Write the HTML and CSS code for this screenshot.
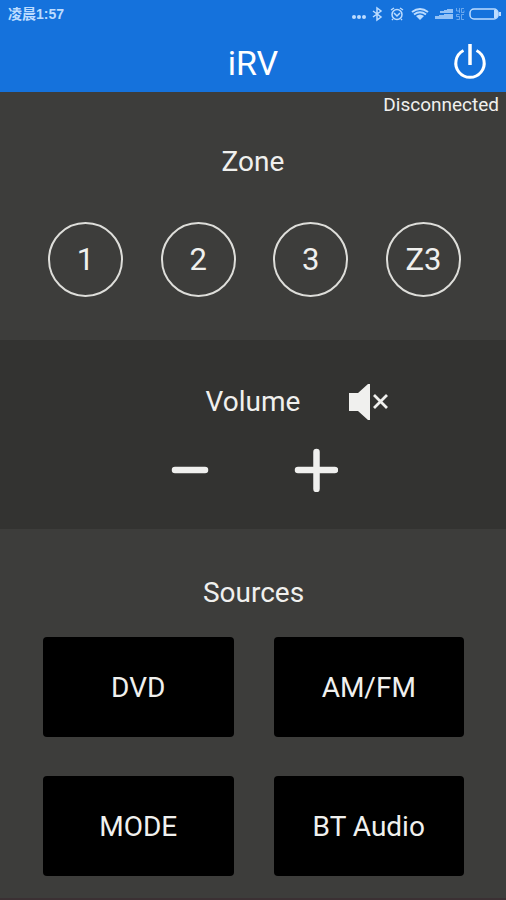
FILE: index.html
```html
<!DOCTYPE html>
<html lang="en">
<head>
<meta charset="utf-8">
<meta name="viewport" content="width=device-width, initial-scale=1">
<title>iRV</title>
<link rel="stylesheet" href="styles.css">
</head>
<body>
<div class="status-bar">
  <span class="clock" lang="zh-CN">凌晨1:57</span>
  <svg class="status-icons" viewBox="0 0 150 18" aria-hidden="true">
    <g fill="currentColor">
      <circle cx="2" cy="12" r="2"/><circle cx="7" cy="12" r="2"/><circle cx="12" cy="12" r="2"/>
    </g>
    <g fill="none" stroke="currentColor" stroke-width="1.500">
      <path d="M21 6l8 6-4 3V3l4 3-8 6"/>
      <circle cx="45" cy="9.500" r="5"/>
      <path d="M42 8l3 3 3-3M39 5l3-2M51 5l-3-2M41 14l-1 1M49 14l1 1"/>
      <path d="M60 7q8-6 16 0M62 9.500q6-4.500 12 0" stroke-width="2"/>
    </g>
    <path d="M64 11q4-3 8 0l-4 4z" fill="currentColor"/>
    <path d="M85 8h3V6h4V5h3V4h6v4zM83 14v-3h4v-1h5V9h9v5z" fill="currentColor" opacity=".75"/>
    <g fill="none" stroke="currentColor" opacity=".5">
      <path d="M104.500 3v3h3M107.500 3v5M112 3.500h-2.500v4h2.500v-2M107.500 9.500h-3v2h3v3h-3M112 9.500h-2.500v5h2.500"/>
    </g>
    <rect x="118" y="4" width="28" height="10" rx="4" fill="none" stroke="currentColor" stroke-width="1.500"/>
    <path d="M142 5h2q2 0 2 4t-2 4h-2zM147 7h2v4h-2z" fill="currentColor"/>
  </svg>
</div>
<header class="app-bar">
  <h1 class="app-title">iRV</h1>
  <button class="icon-button power" type="button" aria-label="Power">
    <svg class="power-icon" viewBox="0 0 36 40" fill="none" stroke="currentColor" stroke-width="3" aria-hidden="true">
      <path d="M11.500 7.500A14.200 14.200 0 1 0 24.500 7.500"/>
      <path d="M18 1v21" stroke-width="3.500"/>
    </svg>
  </button>
</header>
<main class="panels">
  <section class="zone">
    <p class="connection">Disconnected</p>
    <h2 class="heading">Zone</h2>
    <div class="zone-list">
      <button class="zone-button" type="button">1</button>
      <button class="zone-button" type="button">2</button>
      <button class="zone-button" type="button">3</button>
      <button class="zone-button" type="button">Z3</button>
    </div>
  </section>
  <section class="volume">
    <div class="volume-title">
      <h2 class="heading">Volume</h2>
      <button class="icon-button mute" type="button" aria-label="Mute">
        <svg class="mute-icon" viewBox="0 0 40 38" aria-hidden="true">
          <path d="M1 10h9L20 1h2v36h-2L10 28H1z" fill="currentColor"/>
          <path d="M26 12l13 13M39 12L26 25" stroke="currentColor" stroke-width="2.800"/>
        </svg>
      </button>
    </div>
    <div class="volume-steps">
      <button class="icon-button" type="button" aria-label="Volume down">
        <svg class="step-icon" viewBox="0 0 44 44" stroke="currentColor" stroke-width="6.500" stroke-linecap="round" aria-hidden="true"><path d="M7 22h30"/></svg>
      </button>
      <button class="icon-button" type="button" aria-label="Volume up">
        <svg class="step-icon" viewBox="0 0 44 44" stroke="currentColor" stroke-width="6.500" stroke-linecap="round" aria-hidden="true"><path d="M4 22h37M22.500 4v37"/></svg>
      </button>
    </div>
  </section>
  <section class="sources">
    <h2 class="heading">Sources</h2>
    <div class="source-grid">
      <button class="source-button" type="button">DVD</button>
      <button class="source-button" type="button">AM/FM</button>
      <button class="source-button" type="button">MODE</button>
      <button class="source-button" type="button">BT Audio</button>
    </div>
  </section>
</main>
</body>
</html>
```
FILE: styles.css
```css
* {
  box-sizing: border-box;
}

body {
  margin: 0;
  min-height: 100vh;
  background: #3d3d3b;
  color: #f0f0ee;
  font-family: Roboto, "Noto Sans CJK SC", sans-serif;
}

h1,
h2,
p {
  margin: 0;
  font-weight: 400;
}

button {
  padding: 0;
  border: 0;
  background: none;
  color: inherit;
  font: inherit;
  cursor: pointer;
}

svg {
  display: block;
}

.status-bar {
  display: flex;
  align-items: center;
  justify-content: space-between;
  height: 28px;
  padding: 0 4px 0 8px;
  background: #1572dc;
  color: #bcdcff;
}

.clock {
  font-family: "Liberation Sans", "Noto Sans CJK SC", sans-serif;
  font-size: 14px;
  font-weight: 700;
  line-height: 20px;
}

.status-icons {
  width: 150px;
  height: 18px;
}

.app-bar {
  display: grid;
  grid-template-columns: 1fr auto 1fr;
  align-items: center;
  height: 64px;
  padding: 6px 18px 0;
  background: #1572dc;
  color: #fff;
}

.app-title {
  grid-column: 2;
  font-size: 34px;
  line-height: 40px;
}

.power {
  justify-self: end;
}

.power-icon {
  width: 36px;
  height: 40px;
}

.connection {
  padding: 0 7px;
  font-size: 19px;
  line-height: 26px;
  text-align: right;
}

.heading {
  font-size: 28px;
  line-height: 38px;
  text-align: center;
}

.zone {
  padding-bottom: 43px;
}

.zone .heading {
  margin-top: 25px;
}

.zone-list {
  display: flex;
  justify-content: space-between;
  margin-top: 41px;
  padding: 0 45px 0 48px;
}

.zone-button {
  width: 75px;
  height: 75px;
  border: 2px solid #dededa;
  border-radius: 50%;
  font-size: 31px;
}

.volume {
  padding: 43px 0 37px;
  background: #333331;
}

.volume-title {
  display: grid;
  grid-template-columns: 1fr auto 1fr;
  align-items: center;
  column-gap: 48px;
}

.volume-title .heading {
  grid-column: 2;
}

.mute {
  justify-self: start;
}

.mute-icon {
  width: 40px;
  height: 38px;
}

.volume-steps {
  display: flex;
  justify-content: center;
  gap: 82px;
  margin-top: 27px;
}

.step-icon {
  width: 44px;
  height: 44px;
}

.sources {
  padding: 45px 42px 22px 43px;
  border-bottom: 2px solid #3b3033;
}

.source-grid {
  display: grid;
  grid-template-columns: 1fr 1fr;
  gap: 39px 40px;
  margin-top: 25px;
}

.source-button {
  height: 100px;
  border-radius: 4px;
  background: #000;
  font-size: 28px;
}
```
